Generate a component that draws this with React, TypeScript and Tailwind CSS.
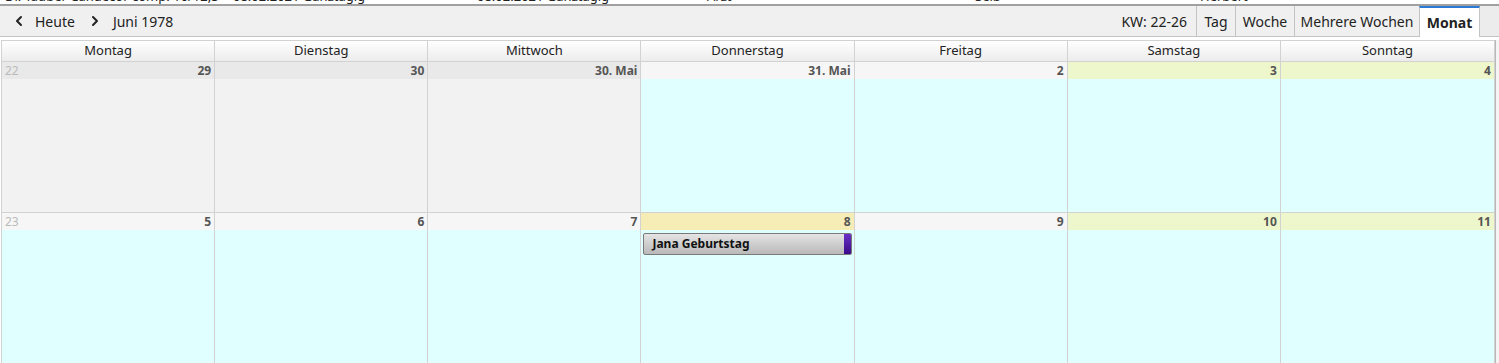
import { ChevronLeft, ChevronRight } from 'lucide-react';

type Cell = {
    label: string;
    week?: string;
    kind: 'past' | 'normal' | 'weekend' | 'today';
    event?: string;
};

const dayNames = ['Montag', 'Dienstag', 'Mittwoch', 'Donnerstag', 'Freitag', 'Samstag', 'Sonntag'];

const weeks: Cell[][] = [
    [
        { label: '29', week: '22', kind: 'past' },
        { label: '30', kind: 'past' },
        { label: '30. Mai', kind: 'past' },
        { label: '31. Mai', kind: 'normal' },
        { label: '2', kind: 'normal' },
        { label: '3', kind: 'weekend' },
        { label: '4', kind: 'weekend' },
    ],
    [
        { label: '5', week: '23', kind: 'normal' },
        { label: '6', kind: 'normal' },
        { label: '7', kind: 'normal' },
        { label: '8', kind: 'today', event: 'Jana Geburtstag' },
        { label: '9', kind: 'normal' },
        { label: '10', kind: 'weekend' },
        { label: '11', kind: 'weekend' },
    ],
];

const barColor: Record<Cell['kind'], string> = {
    past: 'bg-[#e9e9e9]',
    normal: 'bg-[#f6f6f6]',
    weekend: 'bg-[#eef7cc]',
    today: 'bg-[#f5edb5]',
};

const bodyColor: Record<Cell['kind'], string> = {
    past: 'bg-[#f2f2f2]',
    normal: 'bg-[#e0ffff]',
    weekend: 'bg-[#e0ffff]',
    today: 'bg-[#e0ffff]',
};

const tabs = [
    { label: 'Tag', width: 'w-[39px]' },
    { label: 'Woche', width: 'w-[59px]' },
    { label: 'Mehrere Wochen', width: 'w-[125px]' },
    { label: 'Monat', width: 'w-[61px]' },
];

function DayCell({ cell, last }: { cell: Cell; last: boolean }) {
    return (
        <div className={`flex flex-col ${last ? '' : 'border-r border-[#d2d2d2]'}`}>
            <div className={`h-[17px] flex items-center justify-between px-[3px] text-[12px] leading-none ${barColor[cell.kind]}`}>
                <span className="text-[#bbbbbb]">{cell.week ?? ''}</span>
                <span className="font-bold text-[#555]">{cell.label}</span>
            </div>
            <div className={`flex-1 pt-[3px] px-[2px] ${bodyColor[cell.kind]}`}>
                {cell.event && (
                    <div className="h-[22px] flex items-stretch rounded-[2px] border border-[#7a7a7a] bg-gradient-to-b from-[#e4e4e4] to-[#b9b9b9] overflow-hidden">
                        <span className="flex-1 flex items-center pl-[8px] text-[12px] font-bold text-[#111]">
                            {cell.event}
                        </span>
                        <span className="w-[7px] bg-gradient-to-b from-[#6a2fc4] to-[#3a0a8a]" />
                    </div>
                )}
            </div>
        </div>
    );
}

export default function App() {
    return (
        <div className="w-[1499px] h-[363px] overflow-hidden bg-white flex flex-col font-['Noto_Sans',sans-serif] text-[#222]">
            {/* cut-off table rows above */}
            <div className="h-[4px] overflow-hidden">
                <div className="flex -mt-[12px] text-[13px] leading-[16px] text-[#222] whitespace-nowrap">
                    <span className="w-[233px] pl-[5px]">Dr. Tauber Candecor comp. 16/12,5</span>
                    <span className="w-[244px]">08.02.2021 Ganztägig</span>
                    <span className="w-[230px]">08.02.2021 Ganztägig</span>
                    <span className="w-[268px]">Arzt</span>
                    <span className="w-[225px]">Selb</span>
                    <span>Herbert</span>
                </div>
            </div>
            <div className="h-[2px] bg-[#a0a0a0]" />

            {/* toolbar */}
            <div className="h-[31px] flex items-stretch bg-[#f0f0f0] border-b border-[#c4c4c4] text-[14px]">
                <div className="flex items-center pl-[11px] gap-[6px]">
                    <ChevronLeft size={16} strokeWidth={3} className="text-[#222]" />
                    <span className="pl-[2px] pr-[6px]">Heute</span>
                    <ChevronRight size={16} strokeWidth={3} className="text-[#222]" />
                    <span className="pl-[4px]">Juni 1978</span>
                </div>
                <div className="flex-1" />
                <div className="flex items-center pr-[9px] text-[#222]">KW: 22-26</div>
                {tabs.map((t) => {
                    const active = t.label === 'Monat';
                    return (
                        <div
                            key={t.label}
                            className={`${t.width} flex items-center justify-center border-l border-[#c4c4c4] ${
                                active
                                    ? 'bg-white font-bold border-t-2 border-t-[#2b7bd6] -mb-[1px] border-r'
                                    : ''
                            }`}
                        >
                            {t.label}
                        </div>
                    );
                })}
                <div className="w-[19px] bg-[#ececec]" />
            </div>

            <div className="h-[3px]" />

            {/* month grid */}
            <div className="flex-1 flex">
                <div className="w-[1494px] ml-[1px] flex flex-col border-l border-t border-r border-[#d2d2d2]">
                    <div className="grid grid-cols-7 h-[21px] border-b border-[#d2d2d2]">
                        {dayNames.map((d, i) => (
                            <div
                                key={d}
                                className={`flex items-center justify-center text-[13px] bg-gradient-to-b from-white to-[#ececec] ${
                                    i < 6 ? 'border-r border-[#d2d2d2]' : ''
                                }`}
                            >
                                {d}
                            </div>
                        ))}
                    </div>
                    {weeks.map((w, wi) => (
                        <div
                            key={wi}
                            className={`grid grid-cols-7 ${wi === 0 ? 'h-[151px] border-b border-[#d2d2d2]' : 'flex-1'}`}
                        >
                            {w.map((c, ci) => (
                                <DayCell key={ci} cell={c} last={ci === 6} />
                            ))}
                        </div>
                    ))}
                </div>
                <div className="w-[4px] border-l border-[#b8b8b8] bg-[#f4f4f4]" />
            </div>
        </div>
    );
}
